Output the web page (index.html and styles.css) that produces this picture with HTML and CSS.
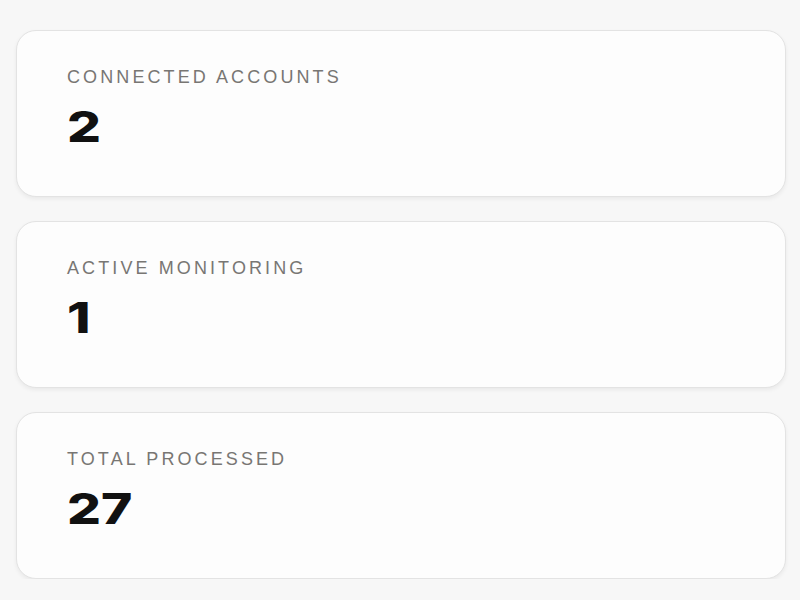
FILE: index.html
```html
<!DOCTYPE html>
<html lang="en">
<head>
    <meta charset="UTF-8">
    <meta name="viewport" content="width=device-width, initial-scale=1.0">
    <title>Dashboard Stats</title>
    <link rel="stylesheet" href="styles.css">
</head>
<body>
    <div class="stats">
        <!-- Stat cards -->
        <div class="stat-card">
            <div class="stat-label">Connected Accounts</div>
            <div class="stat-value">2</div>
        </div>
        <div class="stat-card">
            <div class="stat-label">Active Monitoring</div>
            <div class="stat-value">1</div>
        </div>
        <div class="stat-card">
            <div class="stat-label">Total Processed</div>
            <div class="stat-value">27</div>
        </div>
    </div>
</body>
</html>
```

FILE: styles.css
```css
body {
    margin: 0;
    font-family: "Liberation Sans", Arial, sans-serif;
    background-color: #f7f7f7;
}
.stats {
    display: flex;
    flex-direction: column;
    gap: 24px;
    padding: 30px 14px 0 16px;
}
.stat-card {
    box-sizing: border-box;
    height: 167px;
    padding: 36px 50px 0 50px;
    background-color: #fdfdfd;
    border: 1px solid #e3e3e3;
    border-radius: 20px;
    box-shadow: 0 2px 4px rgba(0, 0, 0, 0.06);
}
.stat-label {
    font-size: 18px;
    line-height: 20px;
    text-transform: uppercase;
    color: #787673;
    letter-spacing: 3.1px;
}
.stat-value {
    display: inline-block;
    margin-top: 14px;
    font-family: Inter, sans-serif;
    font-weight: 800;
    font-size: 43px;
    line-height: 50px;
    color: #111;
    transform: scaleX(1.24);
    transform-origin: left center;
}
```
